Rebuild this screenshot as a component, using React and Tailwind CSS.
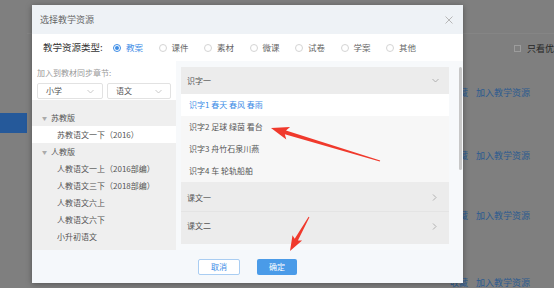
import React from 'react';

const font = { fontFamily: '"Noto Sans CJK SC", "Noto Sans", sans-serif' };

const types = ['教案', '课件', '素材', '微课', '试卷', '学案', '其他'];

const tree = [
  { label: '苏教版', group: true },
  { label: '苏教语文一下（2016）', active: true },
  { label: '人教版', group: true },
  { label: '人教语文一上（2016部编）' },
  { label: '人教语文三下（2018部编）' },
  { label: '人教语文六上' },
  { label: '人教语文六下' },
  { label: '小升初语文' },
];

const lessons = ['识字1 春天 春风 春雨', '识字2 足球 绿茵 看台', '识字3 舟竹石泉川燕', '识字4 车 轮轨船舶'];

const ChevronDown = ({ className = '' }) => (
  <svg width="7" height="5" viewBox="0 0 7 5" className={className}>
    <polyline points="0.5,1 3.5,4 6.5,1" fill="none" stroke="currentColor" strokeWidth="0.9" />
  </svg>
);

const ChevronRight = ({ className = '' }) => (
  <svg width="5" height="7" viewBox="0 0 5 7" className={className}>
    <polyline points="1,0.5 4,3.5 1,6.5" fill="none" stroke="currentColor" strokeWidth="0.9" />
  </svg>
);

const Radio = ({ checked, label }) => (
  <div className="flex w-[45.5px] shrink-0 items-center gap-[5px]">
    <span
      className={`flex h-[8px] w-[8px] items-center justify-center rounded-full border ${
        checked ? 'border-[#3c8ce6]' : 'border-[#d4d4d4]'
      } bg-white`}
    >
      {checked && <span className="h-[4px] w-[4px] rounded-full bg-[#3c8ce6]" />}
    </span>
    <span className={`text-[8.5px] leading-none ${checked ? 'text-[#3c8ce6]' : 'text-[#666]'}`}>{label}</span>
  </div>
);

const Select = ({ value, className = '' }) => (
  <div className={`flex h-[16px] items-center justify-between rounded-[2px] border border-[#e2e2e2] bg-white pl-[8px] pr-[8px] ${className}`}>
    <span className="text-[8px] leading-none text-[#555]">{value}</span>
    <ChevronDown className="text-[#c4c4c4]" />
  </div>
);

const Arrows = () => (
  <svg className="pointer-events-none absolute left-0 top-0" width="554" height="288" viewBox="0 0 554 288">
    <polygon
      fill="#f0392c"
      points="380.2,160.5 286.0,130.4 290.1,127.0 271,128 286.3,139.4 284.8,134.2 379.8,161.5"
    />
    <polygon
      fill="#f0392c"
      points="309.4,217.2 297.9,240.5 302.1,240.6 290,251 292.5,235.2 294.7,238.7 308.6,216.8"
    />
  </svg>
);

export default function App() {
  return (
    <div className="relative h-[288px] w-[554px] overflow-hidden bg-[#7f7f7f]" style={font}>
      {/* page behind the mask */}
      <div className="flex h-full">
        <div className="w-[27px] shrink-0 pt-[113px]">
          <div className="h-[20px] bg-[#25599a]" />
        </div>
        <div className="flex min-w-0 flex-1 flex-col overflow-hidden">
          <div className="h-[34px] shrink-0 border-b border-[#858585]" />
          <div className="flex h-[28px] shrink-0 items-center gap-[6px] whitespace-nowrap pl-[487px]">
            <span className="h-[7px] w-[7px] shrink-0 border border-[#9c9c9c]" />
            <span className="text-[9px] leading-none text-[#262626]">只看优秀</span>
          </div>
          {[60, 66, 54, 80].map((h, i) => (
            <div
              key={i}
              style={{ height: h }}
              className="flex shrink-0 items-center justify-end gap-[8px] whitespace-nowrap pr-[24px] text-[9px] leading-none text-[#2c5b90]"
            >
              <span>收藏</span>
              <span>加入教学资源</span>
            </div>
          ))}
        </div>
      </div>

      {/* dialog */}
      <div className="absolute left-[32px] top-[5px] flex h-[278px] w-[431px] flex-col bg-white shadow-[0_1px_6px_rgba(0,0,0,0.35)]">
        <div className="flex h-[29px] shrink-0 items-center justify-between bg-[#eef2f6] pl-[8px] pr-[10px]">
          <span className="text-[9px] leading-none text-[#666]">选择教学资源</span>
          <svg width="8" height="8" viewBox="0 0 8 8">
            <path d="M0.5 0.5 L7.5 7.5 M7.5 0.5 L0.5 7.5" stroke="#b0b0b0" strokeWidth="0.9" />
          </svg>
        </div>

        <div className="flex h-[27px] shrink-0 items-center pl-[11px]">
          <span className="w-[70px] shrink-0 text-[9.5px] leading-none text-[#333]">教学资源类型:</span>
          {types.map((t, i) => (
            <Radio key={t} label={t} checked={i === 0} />
          ))}
        </div>

        <div className="flex min-h-0 flex-1">
          <div className="flex w-[144px] shrink-0 flex-col">
            <div className="shrink-0 bg-white pb-[1px] pl-[5px] pt-[7px]">
              <div className="h-[10px] text-[8px] leading-[10px] text-[#999]">加入到教材同步章节:</div>
              <div className="mt-[5px] flex gap-[4px]">
                <Select value="小学" className="w-[66px]" />
                <Select value="语文" className="w-[64px]" />
              </div>
            </div>
            <div className="flex-1 bg-[#efefef] pt-[9px]">
              {tree.map((n) => (
                <div
                  key={n.label}
                  className={`flex h-[17px] items-center whitespace-nowrap text-[8px] leading-none text-[#555] ${
                    n.active ? 'bg-white' : ''
                  } ${n.group ? 'pl-[10px]' : 'pl-[25px]'}`}
                >
                  {n.group && <span className="mr-[4px] text-[5px] text-[#aaa]">▼</span>}
                  {n.label}
                </div>
              ))}
            </div>
          </div>

          <div className="flex flex-1 bg-[#f7f9fb] pl-[5px] pt-[6px]">
            <div className="flex w-[268px] flex-col self-start bg-[#ececec] pb-[4px]">
              <div className="flex h-[27px] items-center justify-between pl-[6px] pr-[10px]">
                <span className="text-[8px] leading-none text-[#555]">识字一</span>
                <ChevronDown className="text-[#aaa]" />
              </div>
              {lessons.map((l, i) => (
                <div
                  key={l}
                  className={`flex h-[22px] items-center pl-[8px] text-[8px] leading-none ${
                    i === 0 ? 'bg-white text-[#3c8ce6]' : 'bg-[#f7f7f7] text-[#555]'
                  }`}
                >
                  {l}
                </div>
              ))}
              {['课文一', '课文二'].map((c, i) => (
                <div
                  key={c}
                  className={`flex h-[28px] items-center justify-between pl-[6px] pr-[12px] ${i === 0 ? 'mt-[2px] border-b border-[#e4e4e4]' : ''}`}
                >
                  <span className="text-[8px] leading-none text-[#555]">{c}</span>
                  <ChevronRight className="text-[#aaa]" />
                </div>
              ))}
            </div>
            <div className="ml-[10px] h-[103px] w-[3px] rounded-full bg-[#c8c8c8]" />
          </div>
        </div>

        <div className="flex h-[33px] shrink-0 items-center gap-[17px] bg-[#f5f8fb] pl-[166px]">
          <button className="flex h-[16px] w-[42px] items-center justify-center rounded-[2px] border border-[#a9cdf2] bg-white text-[8px] leading-none text-[#3c8ce6]">
            取消
          </button>
          <button className="flex h-[16px] w-[40px] items-center justify-center rounded-[2px] bg-[#4a9be8] text-[8px] leading-none text-white">
            确定
          </button>
        </div>
      </div>

      <Arrows />
    </div>
  );
}
